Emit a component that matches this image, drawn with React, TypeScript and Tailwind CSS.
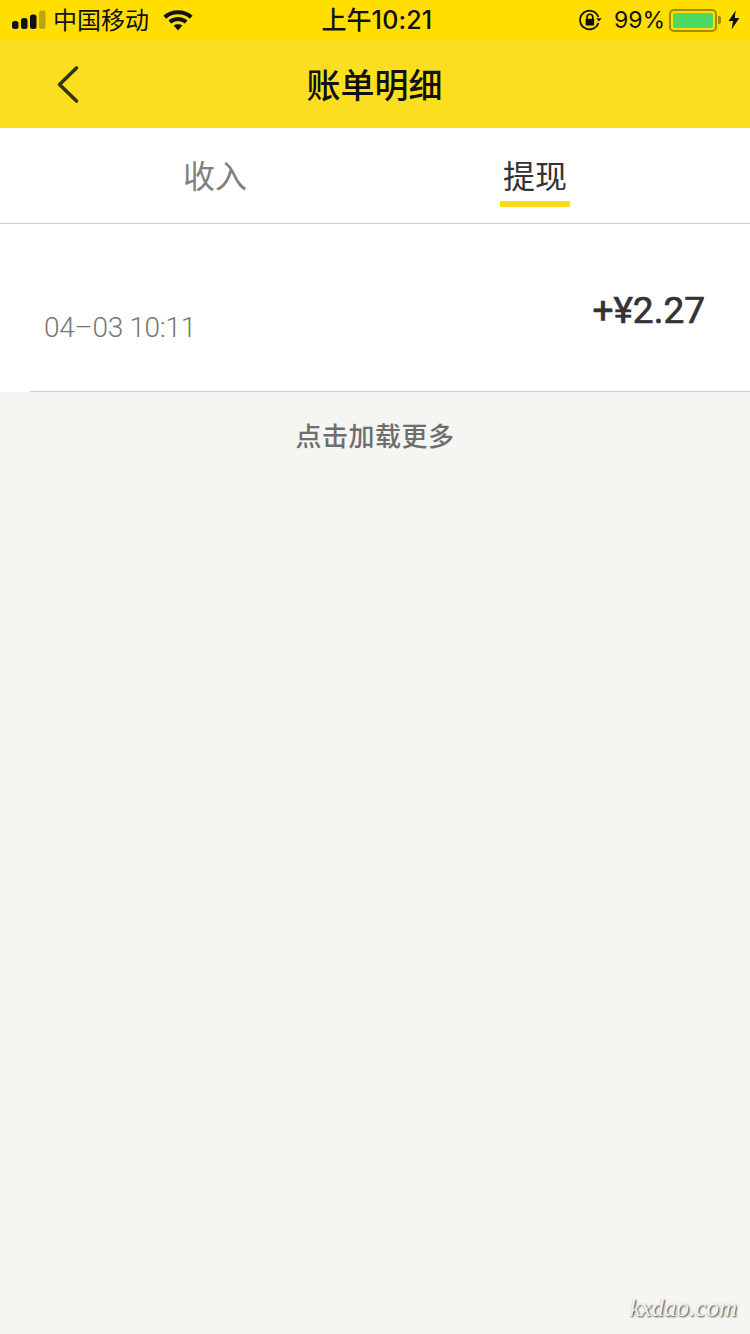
import React from "react";

const cjk = "[font-family:'Noto_Sans_CJK_SC','Liberation_Sans',sans-serif]";

function Signal() {
  return (
    <svg width="34" height="20" viewBox="0 0 34 20" className="block">
      <rect x="0" y="11" width="6.5" height="8" rx="2.5" fill="#111" />
      <rect x="9" y="8" width="6.5" height="11" rx="2.5" fill="#111" />
      <rect x="18" y="4.5" width="6.5" height="14.5" rx="2.5" fill="#111" />
      <rect x="27" y="0.5" width="6.5" height="18.5" rx="2.5" fill="#b9a513" />
    </svg>
  );
}

function Wifi() {
  return (
    <svg width="30" height="22" viewBox="0 0 30 22" className="block">
      <path d="M1.8 8.2 C9 1.6 21 1.6 28.2 8.2" fill="none" stroke="#111" strokeWidth="4.2" />
      <path d="M6.8 13 C11.5 9 18.5 9 23.2 13" fill="none" stroke="#111" strokeWidth="4.2" />
      <path d="M10.6 16.6 C13 14.8 17 14.8 19.4 16.6 L15 21.4 Z" fill="#111" />
    </svg>
  );
}

function RotationLock() {
  return (
    <svg width="24" height="24" viewBox="0 0 24 24" className="block">
      <path d="M20.4 9 A9.4 9.4 0 1 0 20.4 15" fill="none" stroke="#111" strokeWidth="1.8" />
      <path d="M18.2 10.2 L23.6 10.2 L20.9 13.6 Z" fill="#111" />
      <path d="M9 11 V9.2 A2.9 2.9 0 0 1 14.8 9.2 V11" fill="none" stroke="#111" strokeWidth="1.6" />
      <rect x="7.6" y="10.8" width="8.6" height="6.8" rx="1" fill="#111" />
    </svg>
  );
}

function Bolt() {
  return (
    <svg width="12" height="20" viewBox="0 0 12 20" className="block">
      <path d="M7.6 0.5 L0.6 11 L5 11 L3.6 19.5 L11.4 8 L6.8 8 Z" fill="#111" />
    </svg>
  );
}

function Battery() {
  return (
    <div className="flex items-center">
      <div className="h-[23px] w-[48px] rounded-[5px] border-2 border-[#a08c0b] p-[2px]">
        <div className="h-full w-full rounded-[2px] bg-[#4cd964]" />
      </div>
      <div className="ml-[1px] h-[8px] w-[3px] rounded-r-[2px] bg-[#a08c0b]" />
    </div>
  );
}

export default function App() {
  return (
    <div className={`relative flex h-[1334px] w-[750px] flex-col overflow-hidden bg-[#f5f5f1] ${cjk}`}>
      <div className="flex h-[40px] items-center justify-between bg-[#ffde00] pl-[12px] pr-[10px] text-[#111]">
        <div className="flex w-[200px] items-center">
          <Signal />
          <span className="ml-[7px] mt-[-2px] text-[24px] leading-[40px]">中国移动</span>
          <span className="ml-[14px]"><Wifi /></span>
        </div>
        <div className="ml-[2px] mt-[-2px] text-[25px] font-medium leading-[40px]">上午<span className="tracking-[0.2px] [font-family:Inter,sans-serif]">10:21</span></div>
        <div className="flex w-[200px] items-center justify-end">
          <RotationLock />
          <span className="ml-[12px] mt-[-1px] text-[23px] leading-[40px] [font-family:Inter,sans-serif]">99%</span>
          <span className="ml-[4px]"><Battery /></span>
          <span className="ml-[7px]"><Bolt /></span>
        </div>
      </div>

      <div className="relative flex h-[88px] items-center justify-center bg-[#fcde20]">
        <svg width="24" height="40" viewBox="0 0 24 40" className="absolute left-[56px] top-[25px]">
          <path d="M20.5 3 L3.5 19.5 L20.5 36" fill="none" stroke="#333311" strokeWidth="3.6" strokeLinecap="round" strokeLinejoin="round" />
        </svg>
        <h1 className="mr-[1px] text-[34px] font-medium leading-[44px] text-[#111]">账单明细</h1>
      </div>

      <div className="flex h-[96px] border-b border-[#cfcfcf] bg-white">
        <div className="flex flex-1 justify-center pl-[55px]">
          <span className="mt-[22px] text-[32px] leading-[48px] text-[#808080]">收入</span>
        </div>
        <div className="flex flex-1 justify-center pr-[55px]">
          <div className="flex w-[70px] flex-col items-center">
            <span className="mt-[22px] text-[32px] leading-[48px] text-[#333]">提现</span>
            <div className="mt-[3px] h-[6px] w-[70px] bg-[#fcdc1c]" />
          </div>
        </div>
      </div>

      <div className="relative h-[168px] bg-white">
        <div className="flex items-start justify-between pl-[44px] pr-[45px]">
          <span className="mt-[84px] text-[28px] font-light leading-[40px] tracking-[-0.3px] text-[#777] [font-family:Roboto,sans-serif]">04–03 10:11</span>
          <span className="mt-[64px] text-[37px] font-normal leading-[46px] text-[#333] [-webkit-text-stroke:0.7px_#333] [font-family:Roboto,sans-serif]">+¥2.27</span>
        </div>
        <div className="absolute bottom-0 left-[30px] right-0 h-px bg-[#cfcfcf]" />
      </div>

      <div className="mt-[23px] text-center text-[26px] font-medium leading-[40px] tracking-[0.5px] text-[#6e6e6e]">点击加载更多</div>

      <div className="absolute bottom-[10px] right-[13px] text-[25px] italic leading-[32px] text-[#f5f5f1] [font-family:'Liberation_Serif',serif] [text-shadow:1px_1px_2px_#333]">kxdao.com</div>
    </div>
  );
}
